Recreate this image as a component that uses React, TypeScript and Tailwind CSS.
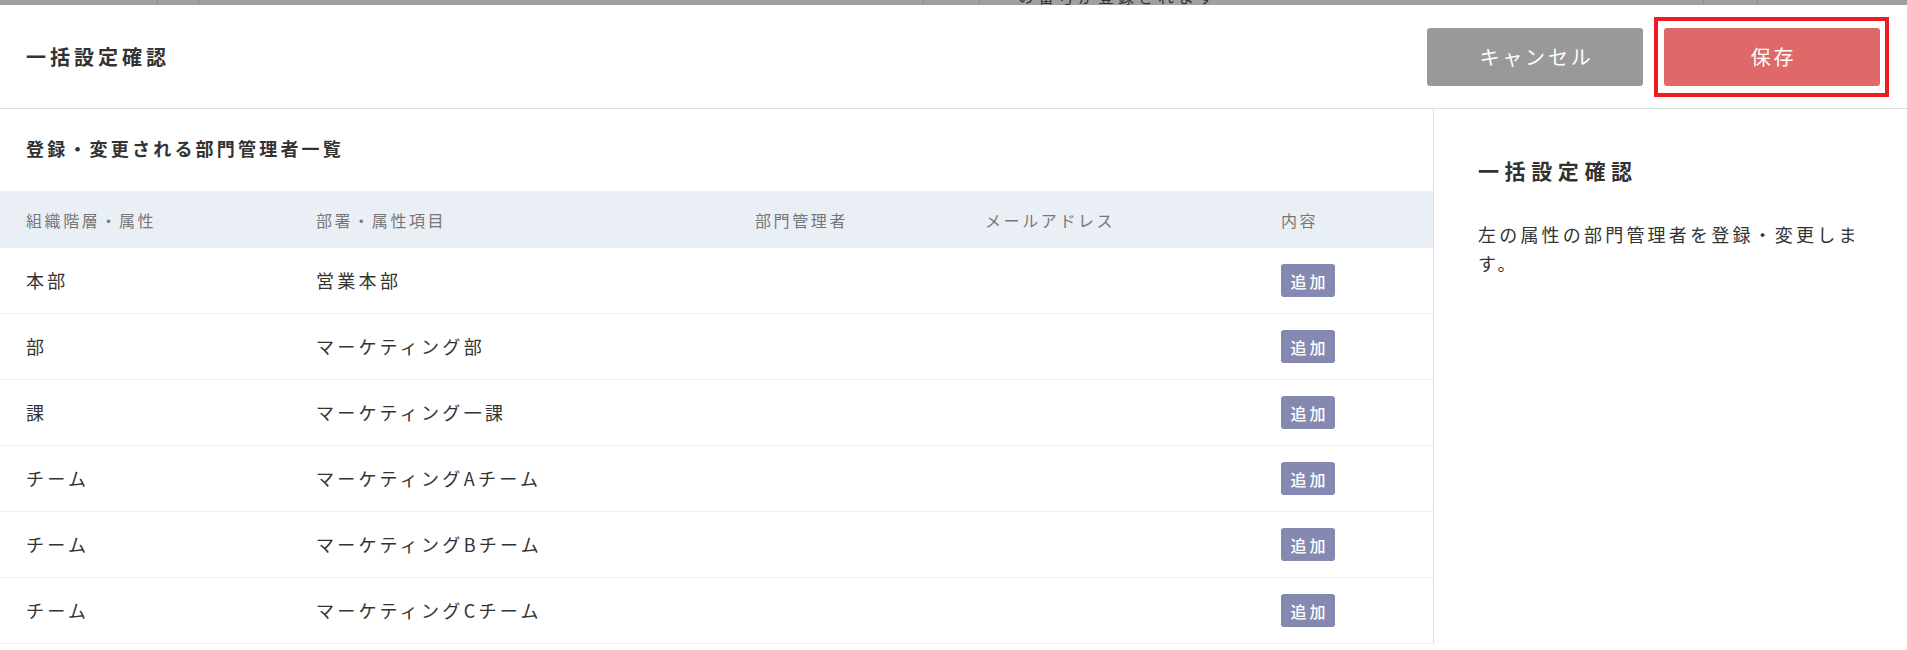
import React from "react";

type Row = {
	level: string;
	dept: string;
	manager: string;
	email: string;
	action: string;
};

const rows: Row[] = [
	{ level: "本部", dept: "営業本部", manager: "", email: "", action: "追加" },
	{ level: "部", dept: "マーケティング部", manager: "", email: "", action: "追加" },
	{ level: "課", dept: "マーケティング一課", manager: "", email: "", action: "追加" },
	{ level: "チーム", dept: "マーケティングAチーム", manager: "", email: "", action: "追加" },
	{ level: "チーム", dept: "マーケティングBチーム", manager: "", email: "", action: "追加" },
	{ level: "チーム", dept: "マーケティングCチーム", manager: "", email: "", action: "追加" },
];

const font = {
	fontFamily: '"Noto Sans CJK JP", "Noto Sans", sans-serif',
};

function Badge({ label }: { label: string }) {
	return (
		<span className="inline-flex items-center justify-center h-[33px] w-[54px] rounded-[3px] bg-[#8589b1] text-white text-[16px] font-medium tracking-[3px] pl-[3px]">
			{label}
		</span>
	);
}

export default function App() {
	return (
		<div className="w-[1907px] bg-white text-[#333]" style={font}>
			{/* backdrop peeking above the modal */}
			<div className="h-[5px] bg-[#a0a0a0] flex overflow-hidden">
				<div className="w-[158px] border-r border-[#8c8c8c]" />
				<div className="w-[41px] border-r border-[#8c8c8c]" />
				<div className="w-[725px] border-r border-[#8c8c8c]" />
				<div className="w-[56px] border-r border-[#8c8c8c]">
				</div>
				<div className="w-[724px] border-r border-[#8c8c8c] pl-[38px]">
					<div className="-mt-[14px] text-[16px] leading-[20px] tracking-[4px] text-[#333] whitespace-nowrap">
						の番号が登録されます
					</div>
				</div>
				<div className="w-[54px] border-r border-[#8c8c8c]" />
				<div className="flex-1" />
			</div>

			{/* Header */}
			<div className="h-[104px] flex items-center justify-between border-b border-[#dddddd] pl-[26px] pr-[27px]">
				<h1 className="text-[20px] font-bold tracking-[4px] leading-[28px]">
					一括設定確認
				</h1>
				<div className="flex items-center gap-[21px]">
					<button className="h-[58px] w-[216px] rounded-[3px] bg-[#999999] text-white text-[20px] tracking-[2.8px] pl-[3px]">
						キャンセル
					</button>
					<div className="relative">
						<button className="h-[58px] w-[216px] rounded-[3px] bg-[#df6969] text-white text-[20px] tracking-[2.8px] pl-[3px]">
							保存
						</button>
						<div className="absolute -left-[10px] -right-[9px] -top-[11px] -bottom-[11px] border-4 border-[#ed1c24] pointer-events-none" />
					</div>
				</div>
			</div>

			{/* Body */}
			<div className="flex">
				{/* Left: list */}
				<div className="w-[1433px]">
					<h2 className="pl-[26px] pt-[27px] pb-[31px] text-[18px] font-bold tracking-[3.2px] leading-[24px]">
						登録・変更される部門管理者一覧
					</h2>
					<div className="grid grid-cols-[290px_439px_230px_296px_1fr] pl-[26px] h-[57px] items-center bg-[#eaeff6] text-[16px] tracking-[2.6px] text-[#777]">
						<div>組織階層・属性</div>
						<div>部署・属性項目</div>
						<div>部門管理者</div>
						<div>メールアドレス</div>
						<div>内容</div>
					</div>
					{rows.map((r, i) => (
						<div
							key={i}
							className="grid grid-cols-[290px_439px_230px_296px_1fr] pl-[26px] h-[66px] items-center border-b border-[#eeeeee] text-[18px] tracking-[3.3px]"
						>
							<div>{r.level}</div>
							<div>{r.dept}</div>
							<div>{r.manager}</div>
							<div>{r.email}</div>
							<div>
								<Badge label={r.action} />
							</div>
						</div>
					))}
				</div>

				{/* Right: summary */}
				<div className="flex-1 border-l border-[#dddddd] pl-[44px] pr-[40px] pt-[47px]">
					<h3 className="text-[21px] font-bold tracking-[5.6px] leading-[28px]">
						一括設定確認
					</h3>
					<p className="mt-[36px] text-[18px] tracking-[3.2px] leading-[29px]">
						左の属性の部門管理者を登録・変更します。
					</p>
				</div>
			</div>
		</div>
	);
}
